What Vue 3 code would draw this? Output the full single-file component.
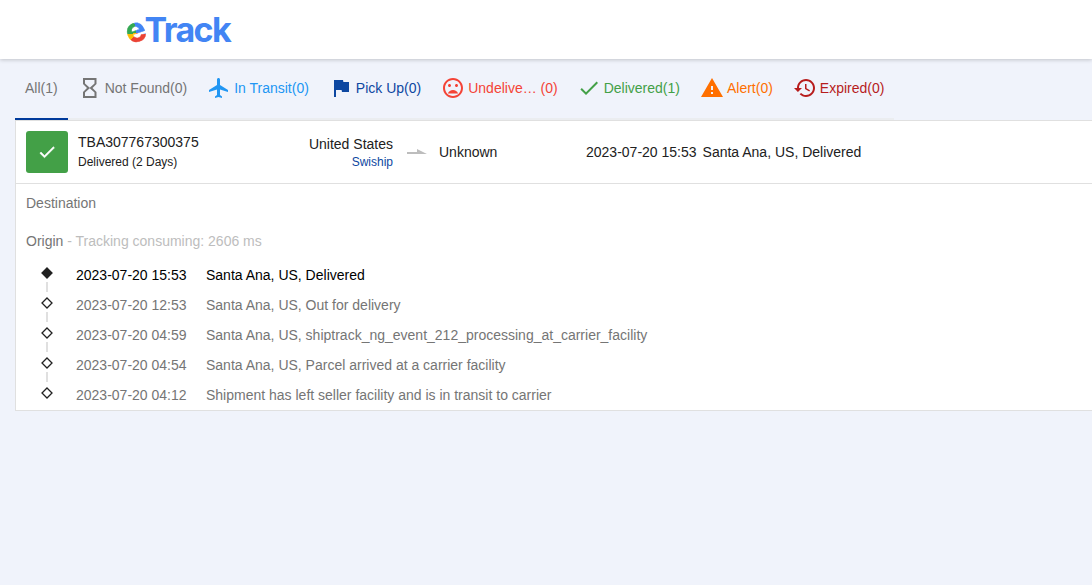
<script setup>
import {ref} from 'vue';

const activeTab = ref('all');

const tabs = [
    {id: 'all', label: 'All', count: 1},
    {
        id: 'not-found',
        label: 'Not Found',
        count: 0,
        icon: 'M5 2h13.500v6l-4 4 4 4v6H5v-6l4-4-4-4zm11.500 14.500l-4.750-4.250L7 16.500V20h9.500zm-4.750-4.750L16.500 7.500V4H7v3.500z',
    },
    {
        id: 'transit',
        label: 'In Transit',
        count: 0,
        icon: 'M21 16v-2l-8-5V3.5c0-.83-.67-1.5-1.5-1.5S10 2.67 10 3.5V9l-8 5v2l8-2.5V19l-2 1.5V22l3.5-1 3.5 1v-1.5L13 19v-5.5l8 2.5z',
    },
    {
        id: 'pickup',
        label: 'Pick Up',
        count: 0,
        icon: 'M14.4 6L14 4H5v17h2v-7h5.6l.4 2h7V6z',
    },
    {
        id: 'undelivered',
        label: 'Undelive… ',
        count: 0,
        icon: 'M12 14c-2.33 0-4.31 1.46-5.11 3.5h10.22c-.8-2.04-2.78-3.5-5.11-3.5zM15.5 11c.83 0 1.5-.67 1.5-1.5S16.33 8 15.5 8 14 8.67 14 9.5s.67 1.5 1.5 1.5zm-7 0c.83 0 1.5-.67 1.5-1.5S9.33 8 8.5 8 7 8.67 7 9.5s.67 1.5 1.5 1.5zM11.99 2C6.47 2 2 6.48 2 12s4.47 10 9.99 10C17.52 22 22 17.52 22 12S17.52 2 11.99 2zM12 20c-4.42 0-8-3.58-8-8s3.58-8 8-8 8 3.58 8 8-3.58 8-8 8z',
    },
    {
        id: 'delivered',
        label: 'Delivered',
        count: 1,
        icon: 'M9 16.17L4.83 12l-1.42 1.41L9 19 21 7l-1.41-1.41z',
    },
    {
        id: 'alert',
        label: 'Alert',
        count: 0,
        icon: 'M1 21h22L12 2 1 21zm12-3h-2v-2h2v2zm0-4h-2v-4h2v4z',
    },
    {
        id: 'expired',
        label: 'Expired',
        count: 0,
        icon: 'M13 3c-4.97 0-9 4.03-9 9H1l3.89 3.89.07.14L9 12H6c0-3.87 3.13-7 7-7s7 3.13 7 7-3.13 7-7 7c-1.93 0-3.68-.79-4.94-2.06l-1.42 1.42C8.27 19.99 10.51 21 13 21c4.97 0 9-4.03 9-9s-4.03-9-9-9zm-1 5v5l4.28 2.54.72-1.21-3.5-2.08V8H12z',
    },
];

const events = [
    {time: '2023-07-20 15:53', text: 'Santa Ana, US, Delivered'},
    {time: '2023-07-20 12:53', text: 'Santa Ana, US, Out for delivery'},
    {time: '2023-07-20 04:59', text: 'Santa Ana, US, shiptrack_ng_event_212_processing_at_carrier_facility'},
    {time: '2023-07-20 04:54', text: 'Santa Ana, US, Parcel arrived at a carrier facility'},
    {time: '2023-07-20 04:12', text: 'Shipment has left seller facility and is in transit to carrier'},
];
</script>

<template>
    <div class="page">
        <header>
            <div class="logo"><span class="logo-e">e</span><span class="logo-track">Track</span></div>
        </header>
        <nav>
            <div
                v-for="tab in tabs"
                :key="tab.id"
                class="tab"
                :class="[tab.id, {active: tab.id === activeTab}]"
                @click="activeTab = tab.id"
            >
                <svg v-if="tab.icon" viewBox="0 0 24 24"><path :d="tab.icon" /></svg>
                <span>{{ tab.label }}({{ tab.count }})</span>
            </div>
        </nav>
        <main>
            <!-- Summary -->
            <section class="summary">
                <div class="status">
                    <svg viewBox="0 0 24 24"><path d="M9 16.17L4.83 12l-1.42 1.41L9 19 21 7l-1.41-1.41z" /></svg>
                </div>
                <div class="number">
                    <div>TBA307767300375</div>
                    <small>Delivered (2 Days)</small>
                </div>
                <div class="from">
                    <div>United States</div>
                    <small>Swiship</small>
                </div>
                <svg class="arrow" viewBox="0 0 20 5"><path d="M0 3h10V0l10 5H0z" /></svg>
                <div class="to">Unknown</div>
                <div class="latest"><span>2023-07-20 15:53</span><span>Santa Ana, US, Delivered</span></div>
            </section>
            <!-- Events -->
            <section class="details">
                <div class="place">Destination</div>
                <div class="place origin">Origin <span>- Tracking consuming: 2606 ms</span></div>
                <ul>
                    <li v-for="event in events" :key="event.time">
                        <span class="marker">
                            <svg viewBox="0 0 12 12"><path d="M6 1l5 5-5 5-5-5z" /></svg>
                        </span>
                        <span class="time">{{ event.time }}</span>
                        <span>{{ event.text }}</span>
                    </li>
                </ul>
            </section>
        </main>
    </div>
</template>

<style>
body {
    background: #f0f3fb;
    overflow: hidden;
}
</style>

<style scoped>
.page {
    font-family: "Liberation Sans", Arial, sans-serif;
    font-size: 14px;
    line-height: 20px;
    color: #212121;
}
svg {
    fill: currentColor;
    flex: none;
}
small {
    font-size: 12px;
}
header {
    box-sizing: border-box;
    height: 59px;
    padding: 10px 0 0 125px;
    background: #fff;
    box-shadow: 0 1px 4px rgba(0, 0, 0, 0.2);
}
.logo {
    display: flex;
    font-family: Inter, sans-serif;
    font-weight: 700;
    line-height: 40px;
}
.logo-e {
    width: 19.500px;
    font-size: 34px;
    transform: rotate(-20deg);
    color: transparent;
    background: conic-gradient(from 20deg at 50% 58%, #4285f4 0 95deg, #ea4335 95deg 215deg, #fbbc05 215deg 260deg, #34a853 260deg 350deg, #4285f4 350deg);
    background-clip: text;
    -webkit-text-stroke: 0.4px transparent;
}
.logo-track {
    font-size: 34px;
    letter-spacing: -1.6px;
    color: #4285f4;
}
nav {
    display: flex;
    width: max-content;
    height: 61px;
    margin-left: 15px;
}
.tab {
    display: flex;
    align-items: center;
    box-sizing: border-box;
    padding: 0 10px 2px;
    border-bottom: 2px solid #ebedf0;
    color: #757575;
    white-space: pre;
    cursor: pointer;
}
.tab svg {
    width: 24px;
    height: 24px;
    margin-right: 3px;
}
.tab.active {
    border-color: #003a9b;
}
.transit {
    color: #2196f3;
}
.pickup {
    color: #0d47a1;
}
.undelivered {
    color: #f44336;
    padding-right: 9px;
}
.delivered {
    color: #43a047;
}
.alert {
    color: #ff6f00;
}
.expired {
    color: #b71c1c;
}
main {
    box-sizing: border-box;
    height: 291px;
    margin-left: 15px;
    border: 1px solid #e0e0e0;
    border-right: 0;
    background: #fff;
}
.summary {
    display: flex;
    align-items: center;
    height: 62px;
    padding-left: 10px;
    border-bottom: 1px solid #e0e0e0;
}
.status {
    display: flex;
    align-items: center;
    justify-content: center;
    width: 42px;
    height: 42px;
    margin-right: 10px;
    border-radius: 3px;
    background: #43a047;
    color: #fff;
}
.status svg {
    width: 20px;
    height: 20px;
    stroke: currentColor;
    stroke-width: 0.6;
}
.number {
    width: 200px;
}
.number small {
    display: block;
    line-height: 20px;
}
.from {
    width: 115px;
    text-align: right;
}
.from small {
    display: block;
    line-height: 16px;
    padding-bottom: 1px;
    color: #0d47a1;
}
.arrow {
    width: 20px;
    height: 5px;
    margin: 0 12px 1px 14px;
    color: #bdbdbd;
}
.to {
    width: 147px;
}
.latest span {
    margin-right: 6px;
}
.details {
    padding: 9px 0 0 10px;
    color: #757575;
}
.origin {
    margin-top: 18px;
}
.origin span {
    color: #bdbdbd;
}
ul {
    margin: 9px 0 0;
    padding: 0;
    list-style: none;
}
li {
    display: flex;
    align-items: center;
    height: 30px;
}
li:first-child {
    color: #000;
}
.marker {
    display: flex;
    flex-direction: column;
    align-items: center;
    width: 42px;
    height: 30px;
    margin-right: 8px;
    padding-top: 7px;
    box-sizing: border-box;
    color: #212121;
}
.marker svg {
    width: 12px;
    height: 12px;
    margin-bottom: 3px;
    overflow: visible;
    fill: none;
    stroke: currentColor;
    stroke-width: 1.3;
}
li:first-child .marker svg {
    fill: currentColor;
}
/* Dash between two markers */
li:not(:last-child) .marker::after {
    content: '';
    flex: none;
    width: 2px;
    height: 10px;
    background: #e0e0e0;
}
.time {
    width: 130px;
}
</style>
